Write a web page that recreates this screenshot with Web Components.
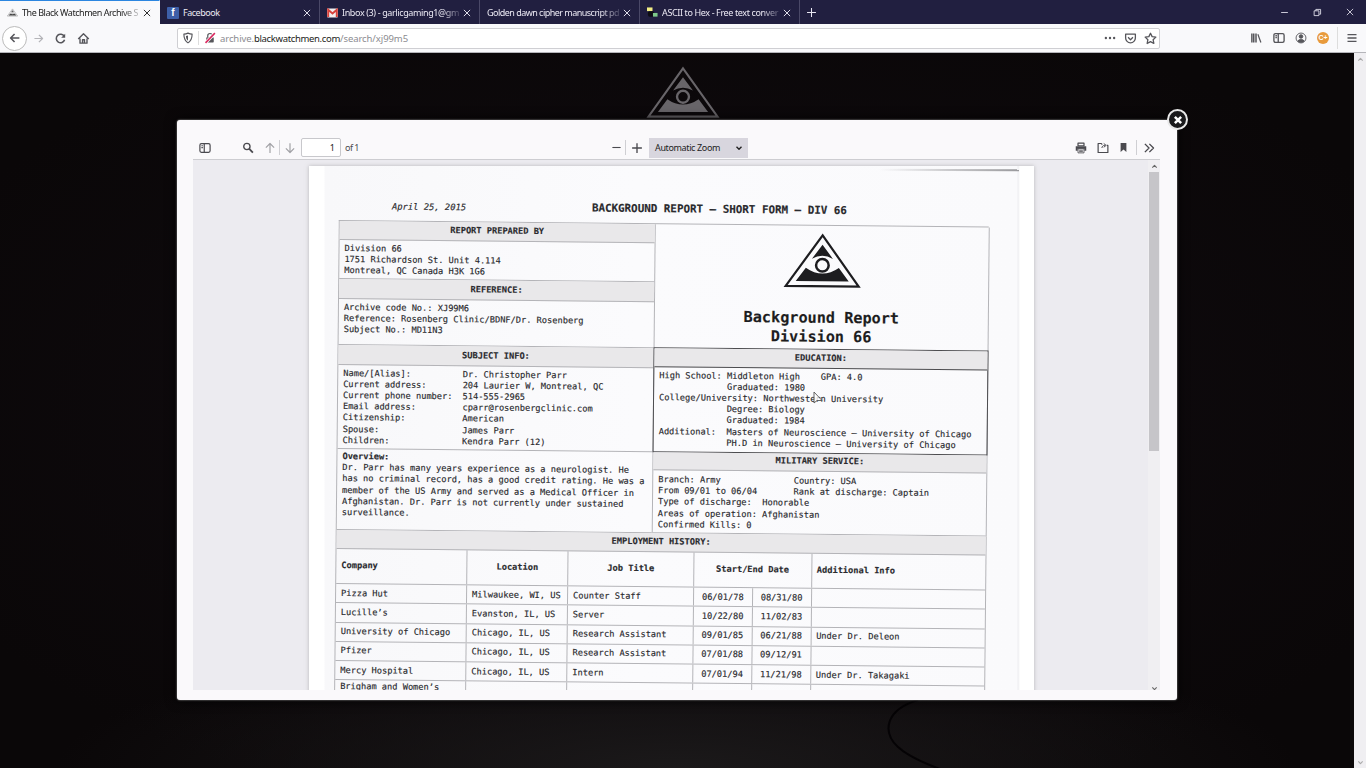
<!DOCTYPE html>
<html lang="en">
<head>
<meta charset="utf-8">
<title>The Black Watchmen Archive</title>
<style>
html,body{margin:0;height:100%;overflow:hidden;background:#0b080b}
</style>
</head>
<body>
<archive-app></archive-app>
<script>
const ICONS = {
  back:'<path d="M13 8H3.5M7.5 3.5L3 8l4.500 4.500"/>',
  fwd:'<path d="M3 8h9.500M8.500 3.500L13 8l-4.500 4.500"/>',
  reload:'<path d="M12.600 5.500A5.200 5.200 0 1 0 13 9.500"/><path d="M13.800 2v5h-5z" fill="currentColor" stroke="none"/>',
  home:'<path d="M1.500 8.500L8 2.200l6.500 6.300M3.700 8v5.700h8.600V8M6.800 13.500v-4h2.400v4"/>',
  shield:'<path d="M8 1.500c2 1 3.800 1.300 5.500 1.300 0 5.500-1 9-5.500 11.700C3.500 11.800 2.500 8.300 2.500 2.800 4.200 2.800 6 2.500 8 1.500z"/><path d="M8 4.500v7C6 10 5.400 8 5.300 5.200 6.300 5.100 7.200 4.900 8 4.500z" fill="currentColor" stroke="none"/>',
  lock:'<path d="M5 7V5a3 3 0 0 1 6 0v2"/><rect x="3" y="7" width="10" height="7" rx="1" fill="currentColor" stroke="none"/><path d="M2 14.500L14.500 1.500" stroke="#fff" stroke-width="4"/><path d="M2 14.500L14.500 1.500" stroke="#d9285f" stroke-width="2"/>',
  dots:'<g fill="currentColor" stroke="none"><circle cx="2.500" cy="8" r="1.600"/><circle cx="8" cy="8" r="1.600"/><circle cx="13.500" cy="8" r="1.600"/></g>',
  pocket:'<path d="M2 2.700h12v4.600a6 6 0 0 1-12 0z"/><path d="M5 6.500l3 3 3-3"/>',
  star:'<path d="M8 1.500l2 4.200 4.600.6-3.400 3.200.9 4.600L8 11.800l-4.100 2.300.9-4.600L1.400 6.300 6 5.700z"/>',
  library:'<path d="M2.500 2v12M5 2v12M8 2v12" stroke-width="2"/><path d="M10.500 3l4 11"/>',
  sidebar:'<rect x="1.200" y="2.200" width="13.600" height="11.600" rx="2"/><path d="M7 2.500v11M3.200 5h2M3.200 7.500h2"/>',
  account:'<circle cx="8" cy="8" r="6.600"/><circle cx="8" cy="6" r="2.400" fill="currentColor"/><path d="M3.800 12c.8-2.500 7.600-2.500 8.400 0-2 2.300-6.400 2.300-8.400 0z" fill="currentColor"/>',
  menu:'<path d="M2 3.500h12M2 8h12M2 12.500h12" stroke-width="1.900"/>',
  close:'<path d="M3 3l10 10M13 3L3 13"/>',
  plus:'<path d="M8 1.500v13M1.500 8h13"/>',
  minus:'<path d="M2 8h12"/>',
  restore:'<path d="M2 5h8.500v8.500H2zM5 5V2.500h8.500V11H11"/>',
  search:'<circle cx="6.500" cy="6" r="4.200"/><path d="M9.700 9.300l4.800 5" stroke-width="2.400"/>',
  up:'<path d="M8 14.500V2M2.500 7.500L8 2l5.500 5.500"/>',
  down:'<path d="M8 1.500V14M2.500 8.500L8 14l5.500-5.500"/>',
  print:'<path d="M4 1.500h8V5H4z"/><path d="M1 5.500h14v6h-2.500V9h-9v2.500H1z" fill="currentColor" stroke="none"/><path d="M4 9h8v5.500H4zM5.500 11h5M5.500 12.800h5" stroke-width="1.100"/>',
  open:'<path d="M7 3.500L5.800 2H1.500v12h13V4.500H13"/><path d="M6.500 8c.3-2.300 1.600-3.500 4-3.500M9 2l3.200 2.500L9 7" stroke-width="1.300"/>',
  mark:'<path d="M3.800 1.500h8.400v13L8 10.800l-4.200 3.700z" fill="currentColor" stroke="none"/>',
  more:'<path d="M2.500 2.500L8 8l-5.500 5.500M8.500 2.500L14 8l-5.500 5.500"/>',
  chev:'<path d="M3 5.500l5 5 5-5"/>',
  chevup:'<path d="M3 10.500l5-5 5 5"/>'
};
function define(name, html, setup){
  const t = document.createElement('template');
  t.innerHTML = html;
  customElements.define(name, class extends HTMLElement{
    connectedCallback(){
      if(this.shadowRoot) return;
      this.attachShadow({mode:'open'}).append(t.content.cloneNode(true));
      if(setup) setup.call(this, this.shadowRoot);
    }
  });
}
const attr = (el,n,d)=>el.getAttribute(n)||d;

define('ui-icon','<style>:host{display:inline-flex;flex:none;align-items:center;justify-content:center}svg{display:block;overflow:visible}</style><span></span>',function(r){
  const s=attr(this,'size',12);
  this.style.width=attr(this,'box',s)+'px';
  r.querySelector('span').innerHTML=`<svg width="${s}" height="${s}" viewBox="0 0 16 16" fill="none" stroke="currentColor" stroke-width="${attr(this,'w',1.6)}" stroke-linejoin="round">${ICONS[attr(this,'name')]}</svg>`;
});

/* Text run whose tracking is set so that it fills a given width. */
define('fit-text','<style>:host{display:inline-block;white-space:pre;flex:none}span{display:inline-block}</style><span><slot></slot></span>',function(r){
  const w=+attr(this,'width'), s=r.querySelector('span');
  const n=this.textContent.length;
  s.style.letterSpacing=((w-s.getBoundingClientRect().width)/n)+'px';
  this.style.width=w+'px';
});

define('eye-mark',`<style>:host{display:block}svg{display:block;width:100%;height:100%}</style>
<svg viewBox="0 0 78 56"><path d="M39 2.500L75.500 53.500H2.500z" fill="none" stroke="currentColor" stroke-width="2.200"/>
<path d="M39 12L49.500 26Q39 20 28.500 26z" fill="currentColor"/>
<path d="M22.500 35Q39 46.500 55.500 35L65.500 48.500H12.500z" fill="currentColor"/>
<circle cx="39" cy="32.500" r="6.300" fill="none" stroke="currentColor" stroke-width="2.500"/></svg>`);

define('browser-tab',`<style>
:host{display:flex;box-sizing:border-box;width:160px;height:24px;align-items:center;color:#eceaf4;border-right:1px solid #4a4867;padding:1px 0 0 7px;font:9px "Noto Sans",sans-serif}
:host([active]){background:#f9f9fb;color:#222;border-top:1.500px solid #2c86e0;border-right-color:#f9f9fb;padding-top:0}
.t{flex:1;overflow:hidden;display:flex}
.fade{-webkit-mask:linear-gradient(90deg,#000 84%,#0002 100%);mask:linear-gradient(90deg,#000 84%,#0002 100%)}
ui-icon{margin-right:6px}
::slotted([slot=icon]){margin-right:4px;flex:none}
</style><slot name="icon"></slot><div class="t"><slot></slot></div><ui-icon name="close" size="10" box="12" w="1.500"></ui-icon>`,function(r){
  if(this.hasAttribute('fade')) r.querySelector('.t').classList.add('fade');
});

define('tab-strip',`<style>
:host{display:flex;height:24px;background:#211f40;color:#e9e7f2}
.fb{width:12px;height:12px;background:#3d5fa8;border-radius:1px;color:#fff;font:bold 10px/12px "Liberation Sans",sans-serif;text-align:center;display:block}
.eye{width:11px;height:9px;color:#444}
.sp{flex:1}.win{display:flex;align-items:center}
svg{display:block}
</style>
<browser-tab active fade><eye-mark slot="icon" class="eye"></eye-mark><fit-text width="116">The Black Watchmen Archive S</fit-text></browser-tab>
<browser-tab><span slot="icon" class="fb">f</span><fit-text width="36.500">Facebook</fit-text></browser-tab>
<browser-tab fade><svg slot="icon" width="11" height="10" viewBox="0 0 11 10"><rect width="11" height="9" y=".5" rx="1" fill="#f4f0f0"/><path d="M1.200 9V1.800L5.500 5.500 9.800 1.800V9" fill="none" stroke="#d8423c" stroke-width="2"/></svg><fit-text width="117">Inbox (3) - garlicgaming1@gm</fit-text></browser-tab>
<browser-tab fade><fit-text width="132">Golden dawn cipher manuscript pd</fit-text></browser-tab>
<browser-tab fade><svg slot="icon" width="11" height="11" viewBox="0 0 12 11"><rect width="6" height="4" x="0" fill="#f2ee84"/><rect width="7" height="6" x="1" y="4" rx="2" fill="#0c0c14"/><rect width="5" height="4" x="6.500" y="6" fill="#7dc98a"/></svg><fit-text width="116">ASCII to Hex - Free text conver</fit-text></browser-tab>
<ui-icon name="plus" size="11" box="23" w="1.500"></ui-icon>
<div class="sp"></div>
<div class="win"><ui-icon name="minus" size="9" box="33" w="1.500"></ui-icon><ui-icon name="restore" size="9" box="33" w="1.500"></ui-icon><ui-icon name="close" size="10" box="32" w="1.300"></ui-icon></div>`);

define('nav-bar',`<style>
:host{display:flex;height:29px;box-sizing:border-box;align-items:center;background:#f9f9fb;color:#56565b;border-bottom:1px solid #b5b5ba;padding-left:2px;font:9.500px "Noto Sans",sans-serif}
.back{width:23px;height:23px;border:1px solid #bbb;border-radius:50%;display:flex;justify-content:center;box-sizing:content-box;background:#fff}
.dim{color:#b4b4b8}
.url{display:flex;align-items:center;box-sizing:border-box;width:983px;height:21px;margin-left:83px;background:#fff;border:1px solid #cfcfd3;border-radius:2px}
.sep{width:1px;height:14px;background:#ddd}
.a{color:#8b8b90}.b{color:#1c1c20}
.sp{flex:1}
.co{width:12px;height:12px;margin:0 8px 0 5px;border-radius:50%;background:#e89a3c;color:#fff;font:bold 7px/12px "Liberation Sans",sans-serif;text-align:center}
</style>
<div class="back"><ui-icon name="back" size="14" w="1.800"></ui-icon></div>
<ui-icon class="dim" name="fwd" size="13" box="22" w="1.500"></ui-icon>
<ui-icon name="reload" size="13" box="23" w="1.900"></ui-icon>
<ui-icon name="home" size="13" box="22" w="1.700"></ui-icon>
<div class="url"><ui-icon name="shield" size="12" box="20" w="1.500"></ui-icon><div class="sep"></div><ui-icon name="lock" size="12" box="21"></ui-icon>
<fit-text class="a" width="34">archive.</fit-text><fit-text class="b" width="86">blackwatchmen.com</fit-text><fit-text class="a" width="68">/search/xj99m5</fit-text>
<div class="sp"></div>
<ui-icon name="dots" size="12" box="20"></ui-icon><ui-icon name="pocket" size="13" box="21"></ui-icon><ui-icon name="star" size="13" box="18"></ui-icon></div>
<div class="sp"></div>
<ui-icon name="library" size="12" box="23"></ui-icon><ui-icon name="sidebar" size="12" box="23" w="1.800"></ui-icon><ui-icon name="account" size="12" box="22" w="1.200"></ui-icon>
<div class="co">C+</div><div class="sep" style="height:22px"></div><ui-icon name="menu" size="12" box="28"></ui-icon>`);

define('pdf-toolbar',`<style>
:host{display:flex;height:23px;align-items:center;color:#4a4a4f;border-bottom:1px solid #cdcdd1;font:9px "Noto Sans",sans-serif;padding-right:0}
.dim{color:#a2a2a6}.sep{width:1px;height:15px;background:#cfcfd3}
.num{box-sizing:border-box;width:40px;height:19px;border:1px solid #c8c8cc;border-radius:2px;background:#fff;text-align:right;padding-right:5px;line-height:17px;margin-right:4px;color:#222}
.sel{display:flex;align-items:center;justify-content:space-between;box-sizing:border-box;width:99px;height:20px;background:#d8d6de;padding:0 4px 0 6px;margin-left:2px;color:#222}
.sp{flex:1}
</style>
<ui-icon name="sidebar" size="12" box="23"></ui-icon><div style="width:19px"></div>
<ui-icon name="search" size="12" box="25" w="1.800"></ui-icon>
<ui-icon class="dim" name="up" size="12" box="19"></ui-icon><div class="sep"></div><ui-icon class="dim" name="down" size="12" box="20"></ui-icon>
<div style="width:1px"></div><div class="num">1</div><fit-text width="14">of 1</fit-text>
<div style="width:248px"></div>
<ui-icon name="minus" size="11" box="18"></ui-icon><div class="sep"></div><ui-icon name="plus" size="12" box="21" w="1.800"></ui-icon>
<div class="sel"><fit-text width="65">Automatic Zoom</fit-text><ui-icon name="chev" size="8" box="11" w="2.800"></ui-icon></div>
<div class="sp"></div>
<ui-icon name="print" size="12" box="22"></ui-icon><ui-icon name="open" size="12" box="21"></ui-icon><ui-icon name="mark" size="11" box="21"></ui-icon><div style="width:2px"></div><div class="sep"></div><ui-icon name="more" size="12" box="23" w="1.800"></ui-icon>`);

define('form-head',`<style>
:host{display:flex;box-sizing:border-box;align-items:center;justify-content:center;background:#e9e8ea;font-weight:bold;border-bottom:1px solid #b4b4b8}
</style><slot></slot>`);
define('form-body',`<style>
:host{display:block;box-sizing:border-box;padding:3px 5px 0;white-space:pre;border-bottom:1px solid #b4b4b8;overflow:hidden}
</style><slot></slot>`);

define('job-row',`<style>
:host{display:grid;grid-template-columns:131px 101px 126px 58.500px 59px 174.500px;height:19.250px;border-bottom:1px solid #b4b4b8;box-sizing:border-box}
div{display:flex;align-items:center;padding-left:5px;border-right:1px solid #b4b4b8;box-sizing:border-box;white-space:pre}
div:last-child{border:0}
.c{justify-content:center;padding:0}
:host([head]){height:35px;font-weight:bold;grid-template-columns:131px 101px 126px 117.500px 174.500px}
:host([tall]){height:40px}
:host([tall]) div{align-items:flex-start;padding-top:1px}
</style>`,function(r){
  const head=this.hasAttribute('head');
  this.getAttribute('cells').split('|').forEach((t,i)=>{
    const d=document.createElement('div');
    d.textContent=t;
    if(head?(i>0&&i<4):(i===3||i===4)) d.className='c';
    r.append(d);
  });
});

define('report-sheet',`<style>
:host{display:block;width:650px;transform:rotate(.57deg);transform-origin:0 0;font:8.670px/11.200px "DejaVu Sans Mono",monospace;color:#2a2a2e;-webkit-text-stroke:.15px #2a2a2e}
.top{display:flex;height:20px;margin-top:-20px;white-space:pre;line-height:12px}
.date{font-style:italic;font-size:8.800px;margin-left:53px;width:200px}
.ttl{font-weight:bold;font-size:10.870px}
.grid{display:grid;grid-template-columns:316px 334px;border-top:1px solid #b4b4b8;border-left:1px solid #b4b4b8;box-sizing:border-box;width:650px}
.l{border-right:1px solid #b4b4b8;box-sizing:border-box}
.r,.jobs{border-right:1px solid #b4b4b8;box-sizing:border-box}
.jobs{grid-column:1/3}
.brand{height:122.500px;box-sizing:border-box;padding-top:7px;font-weight:bold;font-size:15.200px;line-height:19.500px;text-align:center;color:#1d1d20}
.brand eye-mark{width:78px;height:56px;margin:0 auto 19.500px}
.edu{border:1px solid #4d4d50;box-sizing:border-box;margin:0 -1px}
.edu form-head{border-color:#4d4d50}
.edu form-body{border:0}
dl{margin:0;display:grid;grid-template-columns:119.500px 1fr}
dt,dd{margin:0}
</style>
<div class="top"><span class="date">April 25, 2015</span><span class="ttl">BACKGROUND REPORT – SHORT FORM – DIV 66</span></div>
<div class="grid">
<div class="l">
<form-head style="height:19px">REPORT PREPARED BY</form-head>
<form-body style="height:39px">Division 66
1751 Richardson St. Unit 4.114
Montreal, QC Canada H3K 1G6</form-body>
<form-head style="height:19.500px">REFERENCE:</form-head>
<form-body style="height:46.500px">Archive code No.: XJ99M6
Reference: Rosenberg Clinic/BDNF/Dr. Rosenberg
Subject No.: MD11N3</form-body>
<form-head style="height:19.500px">SUBJECT INFO:</form-head>
<form-body style="height:84px"><dl><dt>Name/[Alias]:</dt><dd>Dr. Christopher Parr</dd><dt>Current address:</dt><dd>204 Laurier W, Montreal, QC</dd><dt>Current phone number:</dt><dd>514-555-2965</dd><dt>Email address:</dt><dd>cparr@rosenbergclinic.com</dd><dt>Citizenship:</dt><dd>American</dd><dt>Spouse:</dt><dd>James Parr</dd><dt>Children:</dt><dd>Kendra Parr (12)</dd></dl></form-body>
<form-body style="height:81px;padding-top:2.500px"><div style="font-weight:bold">Overview:</div><div>Dr. Parr has many years experience as a neurologist. He
has no criminal record, has a good credit rating. He was a
member of the US Army and served as a Medical Officer in
Afghanistan. Dr. Parr is not currently under sustained
surveillance.</div></form-body>
</div>
<div class="r">
<div class="brand"><eye-mark></eye-mark>Background Report<br>Division 66</div>
<div class="edu"><form-head style="height:19px">EDUCATION:</form-head>
<form-body style="height:84px;padding-top:3px">High School: Middleton High    GPA: 4.0
             Graduated: 1980
College/University: Northwestern University
             Degree: Biology
             Graduated: 1984
Additional:  Masters of Neuroscience – University of Chicago
             PH.D in Neuroscience – University of Chicago</form-body></div>
<form-head style="height:18px">MILITARY SERVICE:</form-head>
<form-body style="height:63px;padding-top:4.500px">Branch: Army              Country: USA
From 09/01 to 06/04       Rank at discharge: Captain
Type of discharge:  Honorable
Areas of operation: Afghanistan
Confirmed Kills: 0</form-body>
</div>
<div class="jobs"><form-head style="height:19.500px">EMPLOYMENT HISTORY:</form-head>
<job-row head cells="Company|Location|Job Title|Start/End Date|Additional Info"></job-row>
<job-row cells="Pizza Hut|Milwaukee, WI, US|Counter Staff|06/01/78|08/31/80|"></job-row>
<job-row cells="Lucille’s|Evanston, IL, US|Server|10/22/80|11/02/83|"></job-row>
<job-row cells="University of Chicago|Chicago, IL, US|Research Assistant|09/01/85|06/21/88|Under Dr. Deleon"></job-row>
<job-row cells="Pfizer|Chicago, IL, US|Research Assistant|07/01/88|09/12/91|"></job-row>
<job-row cells="Mercy Hospital|Chicago, IL, US|Intern|07/01/94|11/21/98|Under Dr. Takagaki"></job-row>
<job-row tall cells="Brigham and Women’s|||||"></job-row>
</div></div>`);

define('scroll-bar',`<style>
:host{display:flex;flex-direction:column;align-items:center;justify-content:space-between;width:12px;background:#f0eff2;color:#666}
.th{width:10px;background:#c6c5c9;margin-bottom:auto}
ui-icon{height:12px}
</style><ui-icon name="chevup" size="7" w="2.600"></ui-icon><div class="th"></div><ui-icon name="chev" size="7" w="2.600"></ui-icon>`,function(r){
  r.querySelector('.th').style.height=attr(this,'thumb',0)+'px';
});

define('pdf-viewer',`<style>
:host{display:flex;flex-direction:column;width:967px;height:554px;overflow:hidden}
.v{display:flex;flex:1;min-height:0;background:#ecebf0;margin-top:0}
.pages{flex:1;overflow:hidden;padding:6px 0 0 116px;box-sizing:border-box}
.page{width:725px;height:540px;background:linear-gradient(90deg,#fff 15px,#f8f8fa 16px,#fbfbfd 45%,#fafafc 708px,#eeeef1 709px,#fff 711px);box-shadow:0 0 4px #8888;box-sizing:border-box;padding:53.500px 0 0 30px;position:relative}
.page::before{content:"";position:absolute;left:570px;top:3px;width:140px;height:1.500px;background:linear-gradient(90deg,#aaa0,#99999c);transform:rotate(.2deg)}
.cur{position:absolute;left:504px;top:225px}
scroll-bar{height:534px}
</style>
<pdf-toolbar></pdf-toolbar>
<div class="v"><div class="pages"><div class="page"><report-sheet></report-sheet>
<svg class="cur" width="11" height="15" viewBox="0 0 11 15"><path d="M1 1v11l3-2.500h5z" fill="#fffc" stroke="#555" stroke-width=".9"/></svg></div></div><scroll-bar thumb="279"></scroll-bar></div>`);

define('archive-modal',`<style>
:host{display:block;box-sizing:border-box;width:1000px;height:580px;background:#faf9fb;border-radius:3px;padding:16px 0 0 16px;position:relative;box-shadow:0 0 2px #aaa,0 0 12px #000}
.x{position:absolute;right:-11px;top:-11px;width:17px;height:17px;border:2px solid #e8e8e8;border-radius:50%;background:#1a1a1c;color:#fff;display:flex;align-items:center;justify-content:center}
</style><slot></slot><div class="x"><ui-icon name="close" size="10" w="4"></ui-icon></div>`);

define('archive-app',`<style>
:host{display:flex;flex-direction:column;width:1366px;height:768px;overflow:hidden}
.main{flex:1;display:flex;min-height:0}
.site{flex:1;display:flex;flex-direction:column;align-items:center;position:relative;overflow:hidden;
background:radial-gradient(ellipse 620px 130px at 50% 100%,#1b191a,#120f1200),radial-gradient(ellipse at 50% 50%,#110c11,#0a0708 85%)}
.logo{width:74px;height:53px;color:#686569;margin:13px 0 1px 11px}
archive-modal{flex:none}
.wire{position:absolute;left:880px;top:647px}
scroll-bar{height:715px;color:#aaa}
</style>
<tab-strip></tab-strip><nav-bar></nav-bar>
<div class="main"><div class="site">
<svg class="wire" width="80" height="70" fill="none"><path d="M38 0C5 10 2 32 18 47Q30 58 60 69" stroke="#050305" stroke-width="2"/></svg>
<eye-mark class="logo"></eye-mark><archive-modal><pdf-viewer></pdf-viewer></archive-modal></div>
<scroll-bar></scroll-bar></div>`);
</script>
</body>
</html>
